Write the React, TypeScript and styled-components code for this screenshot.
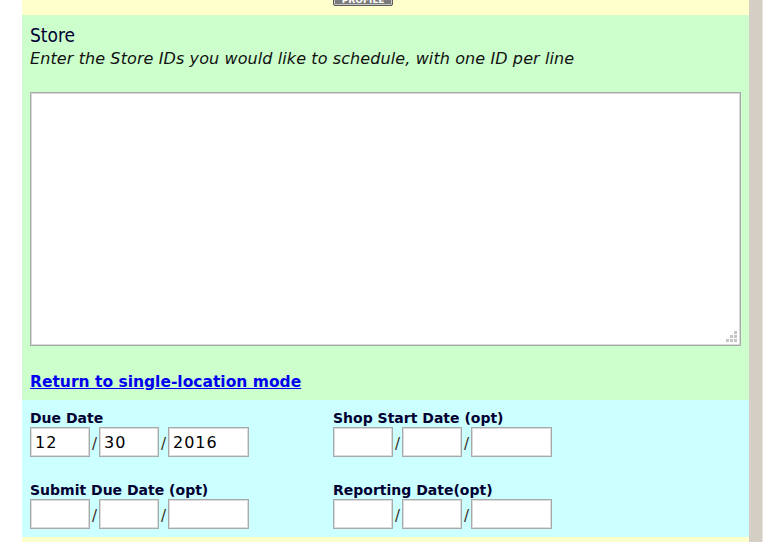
import React from "react";
import styled, { createGlobalStyle } from "styled-components";

const Global = createGlobalStyle`
  html, body { margin: 0; padding: 0; background: #ffffff; overflow: hidden; }
  body { font-family: "DejaVu Sans", Verdana, sans-serif; }
`;

const Page = styled.div`
  display: flex;
  padding-left: 22px;
  height: 542px;
  overflow: hidden;
`;

const Panel = styled.div`
  width: 727px;
  border-right: 13px solid #d5cec5;
  box-shadow: 1px 0 0 #e8e4de;
  display: flex;
  flex-direction: column;
  background: #ffffcc;
`;

const TopBand = styled.div`
  height: 15px;
  background: #ffffcc;
  display: flex;
  justify-content: flex-start;
  padding-left: 311px;
  overflow: hidden;
`;

const ProfileButton = styled.div`
  margin-top: -9px;
  width: 58px;
  height: 13px;
  background: #7a7a7a;
  border: 1px solid #5a5a5a;
  box-shadow: inset 0 0 0 1px #c8c8c8;
  border-radius: 2px;
  color: #ffffff;
  font: bold 9px "DejaVu Sans", sans-serif;
  display: flex;
  align-items: flex-end;
  justify-content: center;
  line-height: 9px;
`;

const StoreSection = styled.section`
  background: #ccffcc;
  padding: 9px 8px 0 8px;
  height: 385px;
  box-sizing: border-box;
  display: flex;
  flex-direction: column;
`;

const Title = styled.div`
  font: 19px "DejaVu Sans Condensed", "DejaVu Sans", sans-serif;
  color: #000033;
  line-height: 22px;
`;

const Hint = styled.div`
  font: italic 16px "DejaVu Sans", sans-serif;
  color: #111111;
  line-height: 18px;
  margin-top: 4px;
  letter-spacing: 0.1px;
`;

const ListWrap = styled.div`
  position: relative;
  margin-top: 24px;
  width: 711px;
  height: 254px;
`;

const StoreList = styled.textarea`
  display: block;
  width: 100%;
  height: 100%;
  box-sizing: border-box;
  border: 1px solid #a8a8a8;
  box-shadow: inset 0 0 0 1px #d8d8d8;
  background: #ffffff;
  resize: none;
  padding: 2px;
  font: 13px "DejaVu Sans", sans-serif;
  outline: none;
`;

const Grip = styled.svg`
  position: absolute;
  right: 4px;
  bottom: 4px;
  width: 11px;
  height: 11px;
`;

const ModeLink = styled.a`
  margin-top: 27px;
  font: bold 15.5px "DejaVu Sans", sans-serif;
  color: #0000ee;
  text-decoration: underline;
  line-height: 18px;
  align-self: flex-start;
  cursor: pointer;
`;

const DateSection = styled.section`
  background: #ccffff;
  height: 137px;
  box-sizing: border-box;
  padding: 9px 8px 0 8px;
  display: grid;
  grid-template-columns: 303px 303px;
  grid-auto-rows: 72px;
`;

const Field = styled.div`
  display: flex;
  flex-direction: column;
`;

const Label = styled.div`
  font: bold 14px "DejaVu Sans", sans-serif;
  color: #000033;
  line-height: 18px;
  height: 18px;
`;

const DateRow = styled.div`
  display: flex;
  align-items: flex-end;
`;

const Box = styled.input<{ $w: number }>`
  width: ${(p) => p.$w}px;
  height: 30px;
  box-sizing: border-box;
  border: 1px solid #a9a9a9;
  box-shadow: inset 0 0 0 1px #dcdcdc;
  background: #ffffff;
  padding: 0 4px;
  font: 16px "DejaVu Sans", sans-serif;
  letter-spacing: 1px;
  color: #000000;
  outline: none;
`;

const Slash = styled.span`
  width: 9px;
  text-align: center;
  font: 15px "DejaVu Sans", sans-serif;
  color: #3a2a1a;
  line-height: 16px;
  margin-bottom: 5px;
`;

const BottomBand = styled.div`
  flex: 1;
  background: #ffffcc;
`;

type DateFieldProps = { label: string; values?: [string, string, string] };

const DateField: React.FC<DateFieldProps> = ({ label, values = ["", "", ""] }) => (
  <Field>
    <Label>{label}</Label>
    <DateRow>
      <Box $w={60} defaultValue={values[0]} />
      <Slash>/</Slash>
      <Box $w={60} defaultValue={values[1]} />
      <Slash>/</Slash>
      <Box $w={81} defaultValue={values[2]} />
    </DateRow>
  </Field>
);

const gripDots: [number, number][] = [
  [8, 0],
  [4, 4],
  [8, 4],
  [0, 8],
  [4, 8],
  [8, 8],
];

export default function App() {
  return (
    <>
      <Global />
      <Page>
        <Panel>
          <TopBand>
            <ProfileButton>PROFILE</ProfileButton>
          </TopBand>
          <StoreSection>
            <Title>Store</Title>
            <Hint>Enter the Store IDs you would like to schedule, with one ID per line</Hint>
            <ListWrap>
              <StoreList />
              <Grip viewBox="0 0 11 11">
                {gripDots.map(([x, y]) => (
                  <rect key={`${x}-${y}`} x={x} y={y} width="3" height="3" fill="#c4c4c4" />
                ))}
              </Grip>
            </ListWrap>
            <ModeLink>Return to single-location mode</ModeLink>
          </StoreSection>
          <DateSection>
            <DateField label="Due Date" values={["12", "30", "2016"]} />
            <DateField label="Shop Start Date (opt)" />
            <DateField label="Submit Due Date (opt)" />
            <DateField label="Reporting Date(opt)" />
          </DateSection>
          <BottomBand />
        </Panel>
      </Page>
    </>
  );
}
